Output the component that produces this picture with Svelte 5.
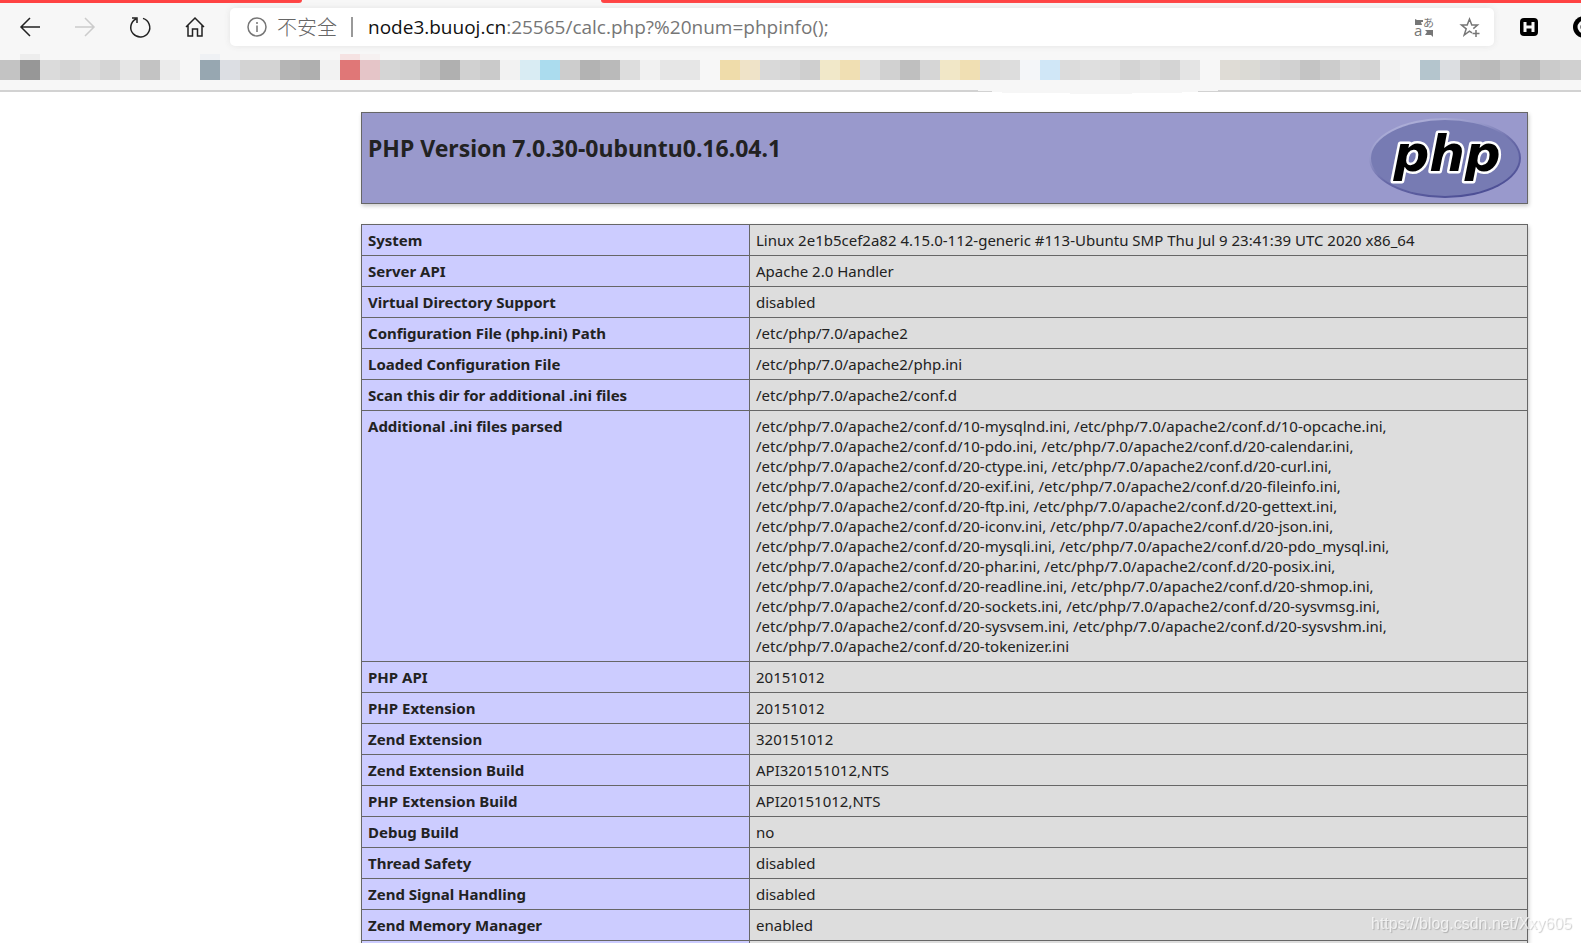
<script lang="ts">
  const conf = '/etc/php/7.0/apache2/conf.d/'

  const iniFiles = [
    ['10-mysqlnd', '10-opcache'],
    ['10-pdo', '20-calendar'],
    ['20-ctype', '20-curl'],
    ['20-exif', '20-fileinfo'],
    ['20-ftp', '20-gettext'],
    ['20-iconv', '20-json'],
    ['20-mysqli', '20-pdo_mysql'],
    ['20-phar', '20-posix'],
    ['20-readline', '20-shmop'],
    ['20-sockets', '20-sysvmsg'],
    ['20-sysvsem', '20-sysvshm'],
    ['20-tokenizer']
  ].map(line => line.map(name => `${conf}${name}.ini`).join(', ')).join(',\n')

  const rows = [
    ['System', 'Linux 2e1b5cef2a82 4.15.0-112-generic #113-Ubuntu SMP Thu Jul 9 23:41:39 UTC 2020 x86_64'],
    ['Server API', 'Apache 2.0 Handler'],
    ['Virtual Directory Support', 'disabled'],
    ['Configuration File (php.ini) Path', '/etc/php/7.0/apache2'],
    ['Loaded Configuration File', '/etc/php/7.0/apache2/php.ini'],
    ['Scan this dir for additional .ini files', '/etc/php/7.0/apache2/conf.d'],
    ['Additional .ini files parsed', iniFiles],
    ['PHP API', '20151012'],
    ['PHP Extension', '20151012'],
    ['Zend Extension', '320151012'],
    ['Zend Extension Build', 'API320151012,NTS'],
    ['PHP Extension Build', 'API20151012,NTS'],
    ['Debug Build', 'no'],
    ['Thread Safety', 'disabled'],
    ['Zend Signal Handling', 'disabled'],
    ['Zend Memory Manager', 'enabled'],
    ['', '']
  ]

  // pixelated bookmarks, one colour per block
  const blocks = (
    'c3c3c3 979797 dbdbdb d5d5d5 dddddd d5d5d5 e6e6e6 c3c3c3 ebebeb f7f7f7 ' +
    '97a7b1 dcdee3 d3d3d3 d3d3d3 b5b5b5 afafaf f2f2f2 e07777 e5c5c8 d5d5d5 ' +
    'd2d2d2 c5c5c5 b0b0b0 d1d1d1 cacaca f2f2f2 d9ecf3 abdcee cdcdcd b3b3b3 ' +
    'bababa dddddd f1f1f1 e6e6e6 e6e6e6 f7f7f7 efdcaa efe3c8 d9d9d9 d6d6d6 ' +
    'cfcfcf f1e8c9 f0dfb3 dfdfdf d1d1d1 bfbfbf d6d6d6 f1e7c7 f0dfb3 dbdbdb ' +
    'dddddd f4f6f9 d0e7f7 dcdcdc dfdfdf dddddd d4d4d4 dadada d4d4d4 e4e4e4 ' +
    'f7f7f7 dfdcd6 dbdad5 d5d5d5 d1d1d1 c4c4c4 cccccc d8d8d8 d4d4d4 f2f2f2 ' +
    'f7f7f7 b4c5cd dcdee1 bebebe bababa c7c7c7 b7b7b7 cbcbcb d0d0d0 d0d0d0'
  ).split(' ')

  // faint upper edge that some of the blocks have
  const caps = { 1: 'ededed', 10: 'eff1f4', 17: 'f5e2e2', 18: 'f6f1f1' }
</script>

<div class="page">
  <header class="browser">
    <div class="tabs">
      <span class="tab left"></span>
      <span class="tab right"></span>
    </div>
    <div class="toolbar">
      <nav class="nav">
        <button aria-label="Back">
          <svg width="24" height="24" viewBox="0 0 24 24"><path d="M22 12H3M12 3l-9 9 9 9" /></svg>
        </button>
        <button aria-label="Forward" class="off">
          <svg width="24" height="24" viewBox="0 0 24 24"><path d="M2 12h19M12 3l9 9-9 9" /></svg>
        </button>
        <button aria-label="Refresh">
          <svg width="24" height="24" viewBox="0 0 24 24"><path d="M15 3.4A9.5 9.5 0 1 1 8 4M4 3h5v5" /></svg>
        </button>
        <button aria-label="Home">
          <svg width="24" height="24" viewBox="0 0 24 24"><path d="M3 12l9-9 9 9M5 10.500V21h4.500v-7h5v7H19V10.500" /></svg>
        </button>
      </nav>
      <div class="address">
        <svg class="info" width="20" height="20" viewBox="0 0 20 20">
          <circle cx="10" cy="10" r="9" /><path d="M10 8.500V15M10 5v2" />
        </svg>
        <span class="insecure">不安全</span>
        <span class="bar"></span>
        <label for="url">node3.buuoj.cn</label>
        <input id="url" type="text" value=":25565/calc.php?%20num=phpinfo();" />
        <button aria-label="Translate">
          <svg class="translate" width="32" height="32" viewBox="-6 -6 32 32">
            <path d="M1 2l2 1h6v2H7l1 3H1zM19 20v-7h-8l2 2-2 3h6z" />
            <text x="0" y="19" font-size="15">a</text>
            <text x="9" y="10" font-size="11">あ</text>
          </svg>
        </button>
        <button aria-label="Add to favourites">
          <svg class="star" width="20" height="20" viewBox="0 0 20 20">
            <path d="M12 15.800l-2.500-1.600L4.200 18l2-6.200L1.500 8h5.700L9.500 2l2.300 6h5.700l-4.200 3.600M12.500 16.500h7M16 13v7" />
          </svg>
        </button>
      </div>
      <div class="extensions">
        <button aria-label="HackBar">
          <svg width="18" height="18" viewBox="0 0 18 18">
            <rect class="solid" width="18" height="18" rx="4" />
            <path class="mark" d="M5 4v10M13 4v10M5 9h8" />
          </svg>
        </button>
        <button aria-label="Extension">
          <svg width="22" height="22" viewBox="0 0 22 22">
            <circle class="solid" cx="11" cy="11" r="11" />
            <circle class="ring" cx="11" cy="11" r="5" />
          </svg>
        </button>
      </div>
    </div>
    <div class="bookmarks">
      {#each blocks as block, i}
        <span style="background-color: #{block}; box-shadow: 0 -6px #{caps[i] ?? 'f7f7f7'}"></span>
      {/each}
    </div>
    <svg class="bulge" width="240" height="4" viewBox="0 0 240 4">
      <path class="gap" d="M0 0h240v1h-18v1h-18v1h-50v1H92V3H24V2H0z" />
      <path class="line" d="M0 1h14v1H0zM220 1h20v1h-20z" />
    </svg>
  </header>

  <main>
    <div class="version">
      <h1>PHP Version 7.0.30-0ubuntu0.16.04.1</h1>
      <a href="http://www.php.net/" aria-label="PHP logo">
        <svg class="logo" width="152" height="80" viewBox="0 0 152 80">
          <defs>
            <linearGradient id="rim" x1="0.2" y1="0" x2="0.8" y2="1">
              <stop offset="0" stop-color="#b4b5dc" />
              <stop offset="0.3" stop-color="#9496c8" />
              <stop offset="0.55" stop-color="#6668a6" />
              <stop offset="1" stop-color="#484a92" />
            </linearGradient>
          </defs>
          <ellipse cx="76" cy="40" rx="76" ry="40" fill="url(#rim)" />
          <ellipse cx="76" cy="40" rx="74" ry="38" fill="#777bb3" />
          <text x="78" y="53" text-anchor="middle">php</text>
        </svg>
      </a>
    </div>

    <table>
      <tbody>
        {#each rows as [name, value]}
          <tr>
            <th scope="row">{name}</th>
            <td>{value}</td>
          </tr>
        {/each}
      </tbody>
    </table>
  </main>

  <div class="watermark">https://blog.csdn.net/Xxy605</div>
</div>

<style>
  :global(body) {
    margin: 0;
    background: #fff;
  }

  .page {
    height: 100vh;
    overflow: hidden;
    font-family: "Open Sans", "Noto Sans CJK SC", sans-serif;
    color: #222;
  }

  .browser {
    position: relative;
    background: #f7f7f7;
    border-bottom: 2px solid #d2d2d2;
  }

  .tabs {
    display: flex;
    justify-content: space-between;
    height: 3px;
  }

  .tab {
    background: #ff4343;
  }

  .left {
    width: 302px;
    border-bottom-right-radius: 4px;
  }

  .right {
    width: 62%;
    border-bottom-left-radius: 4px;
  }

  .toolbar {
    display: flex;
    align-items: center;
    height: 48px;
    padding-left: 2px;
  }

  button {
    display: grid;
    place-items: center;
    flex: none;
    width: 55px;
    height: 38px;
    padding: 0;
    border: 0;
    background: none;
  }

  svg {
    display: block;
    fill: none;
    overflow: visible;
  }

  .nav {
    display: flex;
  }

  .nav path {
    stroke: #222;
    stroke-width: 1.5;
  }

  .nav .off path {
    stroke: #ccc;
  }

  .address {
    display: flex;
    align-items: center;
    flex: 1;
    height: 38px;
    margin: 0 7px 0 8px;
    padding: 0 1px 0 17px;
    border-radius: 5px;
    background: #fff;
    box-shadow: 0 0 6px #e4e4e4;
    font-size: 19px;
    line-height: 38px;
  }

  .address button {
    width: 46px;
  }

  .info circle,
  .info path {
    stroke: #767676;
    stroke-width: 1.5;
  }

  .insecure {
    margin-left: 10px;
    font-family: "Noto Sans CJK SC", sans-serif;
    font-size: 20px;
    font-weight: 300;
    color: #666;
  }

  .bar {
    width: 2px;
    height: 20px;
    margin: 0 15px 0 14px;
    background: #999;
  }

  label {
    color: #111;
  }

  input {
    flex: 1;
    min-width: 0;
    height: 38px;
    padding: 0;
    border: 0;
    outline: 0;
    background: none;
    font: inherit;
    color: #767676;
  }

  .translate {
    fill: #767676;
    font-family: "Open Sans", "Noto Sans CJK JP", sans-serif;
  }

  .star path {
    stroke: #767676;
    stroke-width: 1.5;
  }

  .extensions {
    display: flex;
    width: 80px;
    overflow: hidden;
  }

  .solid {
    fill: #000;
  }

  .mark {
    stroke: #f7f7f7;
    stroke-width: 3;
  }

  .ring {
    stroke: #f7f7f7;
    stroke-width: 3;
  }

  .bookmarks {
    display: flex;
    height: 20px;
    padding: 9px 0 10px;
    overflow: hidden;
  }

  .bookmarks span {
    flex: none;
    width: 20px;
  }

  .bulge {
    position: absolute;
    top: 90px;
    left: 978px;
  }

  .gap {
    fill: #f6f6f6;
  }

  .line {
    fill: #d2d2d2;
  }

  main {
    margin: 20px 53px 0 361px;
    font-family: "Noto Sans", sans-serif;
    font-size: 15px;
    line-height: 20px;
  }

  .version {
    display: flex;
    justify-content: space-between;
    height: 80px;
    padding: 5px 6px;
    border: 1px solid #666;
    background: #99c;
    box-shadow: 1px 2px 4px #ccc;
  }

  h1 {
    margin: 14px 0 0;
    font-size: 23px;
    line-height: 32px;
  }

  .logo text {
    fill: #000;
    stroke: #fff;
    stroke-width: 5;
    stroke-linejoin: round;
    paint-order: stroke;
    font: italic bold 50px "DejaVu Sans", sans-serif;
  }

  table {
    width: 100%;
    margin-top: 20px;
    border-collapse: collapse;
    table-layout: fixed;
    box-shadow: 1px 2px 4px #ccc;
  }

  th,
  td {
    height: 20px;
    padding: 5px 6px;
    border: 1px solid #666;
    text-align: left;
    vertical-align: baseline;
  }

  th {
    width: 375px;
    background: #ccf;
  }

  td {
    background: #ddd;
    white-space: pre-line;
  }

  .watermark {
    position: fixed;
    right: 9px;
    bottom: 9px;
    font: 16px/20px "Liberation Sans", sans-serif;
    color: rgba(255, 255, 255, .7);
    text-shadow: 1px 1px 1px rgba(0, 0, 0, .2);
  }
</style>
